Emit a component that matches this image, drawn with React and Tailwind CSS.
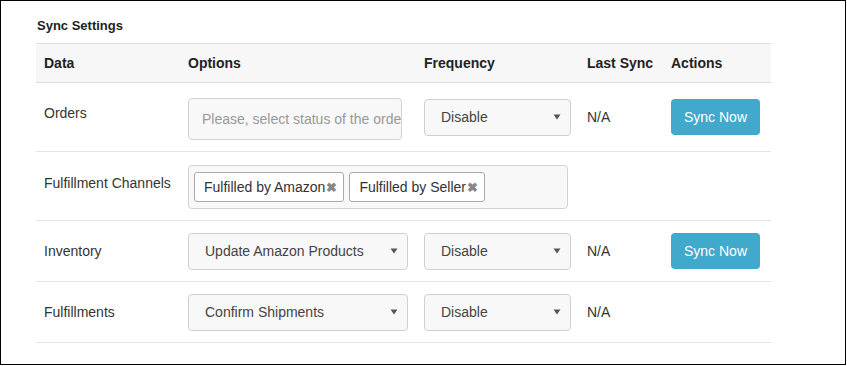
import React from 'react'

const font = { fontFamily: '"Liberation Sans", Arial, sans-serif' }

// Small dark triangle used by the native-looking selects.
function Caret() {
  return (
    <svg className="w-[8px] h-[6px] shrink-0" viewBox="0 0 8 6" aria-hidden="true">
      <path d="M0.5 0.5h7L4 5.5z" fill="#555" />
    </svg>
  )
}

function Select({ value, className = '' }) {
  return (
    <div
      className={`flex h-[37px] items-center justify-between rounded-[4px] border border-[#cfcfcf] bg-[#f8f8f8] pl-[16px] pr-[9px] text-[14px] text-[#444] ${className}`}
    >
      <span>{value}</span>
      <Caret />
    </div>
  )
}

function Tag({ label }) {
  return (
    <div className="flex h-[30px] items-center whitespace-nowrap rounded-[3px] border border-[#aaa] bg-white pl-[9px] pr-[6px] text-[14px] text-[#333]">
      <span>{label}</span>
      <span className="ml-[1px] text-[13px] font-bold leading-none text-[#888]">✖</span>
    </div>
  )
}

function SyncButton() {
  return (
    <button
      type="button"
      className="h-[36px] w-[89px] rounded-[4px] bg-[#41a9cc] text-[14px] text-white"
    >
      Sync Now
    </button>
  )
}

const cols = 'grid grid-cols-[144px_236px_163px_84px_108px]'

export default function App() {
  return (
    <div
      className="h-[365px] w-[846px] border border-black bg-white pl-[35px] text-[#333]"
      style={font}
    >
      <h2 className="pl-[1px] pt-[17px] text-[13px] font-bold leading-[16px] text-[#222]">
        Sync Settings
      </h2>

      <div className="mt-[9px] w-[735px]">
        {/* header */}
        <div
          className={`${cols} h-[40px] items-center border-y border-[#dedede] bg-[#f7f7f7] text-[14px] font-bold text-[#222]`}
        >
          <div className="pl-[8px]">Data</div>
          <div className="pl-[8px]">Options</div>
          <div className="pl-[8px]">Frequency</div>
          <div className="pl-[8px]">Last Sync</div>
          <div className="pl-[8px]">Actions</div>
        </div>

        {/* Orders */}
        <div className={`${cols} h-[69px] items-center border-b border-[#e5e5e5] text-[14px] leading-[20px]`}>
          <div className="pb-[8px] pl-[8px]">Orders</div>
          <div className="pl-[8px] pt-[3px]">
            <div className="flex h-[42px] w-[214px] items-center overflow-hidden whitespace-nowrap rounded-[4px] border border-[#d2d2d2] bg-[#f8f8f8] pl-[13px] text-[#999]">
              Please, select status of the order
            </div>
          </div>
          <div className="pl-[8px]">
            <Select value="Disable" className="w-[147px]" />
          </div>
          <div className="pl-[8px]">N/A</div>
          <div className="pl-[8px]">
            <SyncButton />
          </div>
        </div>

        {/* Fulfillment Channels */}
        <div className={`${cols} h-[69px] items-center border-b border-[#e5e5e5] text-[14px] leading-[20px]`}>
          <div className="pb-[6px] pl-[8px] whitespace-nowrap">Fulfillment Channels</div>
          <div className="col-span-4 pl-[8px] pt-[2px]">
            <div className="flex h-[44px] w-[380px] items-center gap-[5px] rounded-[4px] border border-[#d2d2d2] bg-[#f8f8f8] pl-[5px]">
              <Tag label="Fulfilled by Amazon" />
              <Tag label="Fulfilled by Seller" />
            </div>
          </div>
        </div>

        {/* Inventory */}
        <div className={`${cols} h-[61px] items-center border-b border-[#e5e5e5] text-[14px] leading-[20px]`}>
          <div className="pl-[8px]">Inventory</div>
          <div className="pl-[8px]">
            <Select value="Update Amazon Products" className="w-[220px]" />
          </div>
          <div className="pl-[8px]">
            <Select value="Disable" className="w-[147px]" />
          </div>
          <div className="pl-[8px]">N/A</div>
          <div className="pl-[8px]">
            <SyncButton />
          </div>
        </div>

        {/* Fulfillments */}
        <div className={`${cols} h-[61px] items-center border-b border-[#e5e5e5] text-[14px] leading-[20px]`}>
          <div className="pl-[8px]">Fulfillments</div>
          <div className="pl-[8px]">
            <Select value="Confirm Shipments" className="w-[220px]" />
          </div>
          <div className="pl-[8px]">
            <Select value="Disable" className="w-[147px]" />
          </div>
          <div className="pl-[8px]">N/A</div>
          <div />
        </div>
      </div>
    </div>
  )
}
